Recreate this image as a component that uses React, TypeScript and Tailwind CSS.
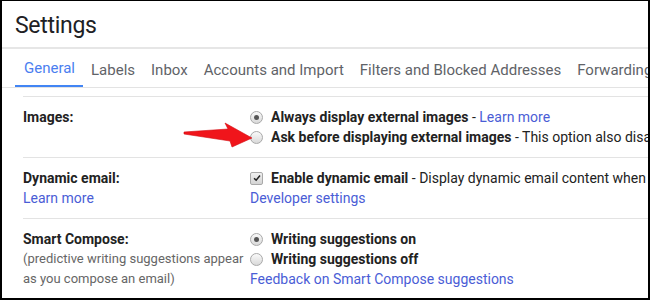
import React from "react";

const tabs = [
  "General",
  "Labels",
  "Inbox",
  "Accounts and Import",
  "Filters and Blocked Addresses",
  "Forwarding and POP/IMAP",
];

function Radio({ checked }: { checked?: boolean }) {
  return (
    <span className="flex h-[13px] w-[13px] shrink-0 items-center justify-center rounded-full border border-[#a9a9a9] bg-gradient-to-b from-[#fafafa] to-[#d9d9d9]">
      {checked && <span className="h-[5px] w-[5px] rounded-full bg-[#555]" />}
    </span>
  );
}

function Checkbox() {
  return (
    <span className="flex h-[13px] w-[13px] shrink-0 items-center justify-center rounded-[2px] border border-[#a9a9a9] bg-gradient-to-b from-[#f0f0f0] to-[#d4d4d4]">
      <svg viewBox="0 0 12 12" className="h-[10px] w-[10px]">
        <path d="M2.5 6.2 L5 8.7 L9.6 3" fill="none" stroke="#222" strokeWidth={1.8} />
      </svg>
    </span>
  );
}

export default function App() {
  return (
    <div
      className="relative h-[300px] w-[650px] overflow-hidden border-t border-r-2 border-b-2 border-l-2 border-black bg-white text-[14px] leading-[20px] text-[#222]"
      style={{ fontFamily: "Roboto, 'Liberation Sans', sans-serif" }}
    >
      {/* Title */}
      <div className="flex h-[46px] items-center pt-[3px] pl-[13px]">
        <h1 className="text-[23px] font-normal tracking-[-0.3px] text-[#202124]">Settings</h1>
      </div>
      <div className="h-[2px] bg-[#e6e6e6]" />

      {/* Tabs */}
      <div className="flex h-[39px] items-end whitespace-nowrap border-b border-[#e3e3e3] pl-[13px] text-[15px] text-[#5f6368]">
        {tabs.map((t, i) => (
          <div
            key={t}
            className={
              i === 0
                ? "flex h-full items-center border-b-2 border-[#4285f4] pr-[8px] pl-[9px] pt-[1px] text-[#4a7ef0]"
                : "flex h-full items-center px-[8px] pt-[3px]"
            }
          >
            {t}
          </div>
        ))}
      </div>

      {/* Settings rows */}
      <div className="ml-[21px] mt-[8px] whitespace-nowrap">
        <div className="flex border-t border-[#e3e3e3] pt-[10px] pb-[10px]">
          <div className="w-[227px] shrink-0 font-bold">Images:</div>
          <div className="flex flex-col">
            <div className="flex items-center gap-[8px]">
              <Radio checked />
              <span>
                <b>Always display external images</b> -{" "}
                <span className="text-[#4a5dd6]">Learn more</span>
              </span>
            </div>
            <div className="flex items-center gap-[8px]">
              <Radio />
              <span>
                <b>Ask before displaying external images</b> - This option also disables dynamic email.
              </span>
            </div>
          </div>
        </div>

        <div className="flex border-t border-[#e3e3e3] pt-[10px] pb-[10px]">
          <div className="flex w-[227px] shrink-0 flex-col">
            <span className="font-bold">Dynamic email:</span>
            <span className="text-[#4a5dd6]">Learn more</span>
          </div>
          <div className="flex flex-col">
            <div className="flex items-center gap-[8px]">
              <Checkbox />
              <span>
                <b>Enable dynamic email</b> - Display dynamic email content when available.
              </span>
            </div>
            <span className="text-[#4a5dd6]">Developer settings</span>
          </div>
        </div>

        <div className="flex border-t border-[#e3e3e3] pt-[10px]">
          <div className="flex w-[227px] shrink-0 flex-col">
            <span className="font-bold">Smart Compose:</span>
            <span className="text-[13px] text-[#666]">(predictive writing suggestions appear</span>
            <span className="text-[13px] text-[#666]">as you compose an email)</span>
          </div>
          <div className="flex flex-col">
            <div className="flex items-center gap-[8px]">
              <Radio checked />
              <b>Writing suggestions on</b>
            </div>
            <div className="flex items-center gap-[8px]">
              <Radio />
              <b>Writing suggestions off</b>
            </div>
            <span className="text-[#4a5dd6]">Feedback on Smart Compose suggestions</span>
          </div>
        </div>
      </div>

      {/* Red annotation arrow */}
      <svg className="absolute left-[178px] top-[118px] h-[34px] w-[76px]" viewBox="0 0 76 34">
        <polygon
          points="4,13 48,10 45,4 72,19 52,28 50,22 4,15"
          fill="#f0151b"
          stroke="#d40a10"
          strokeWidth={0.6}
          strokeLinejoin="round"
        />
      </svg>
    </div>
  );
}
